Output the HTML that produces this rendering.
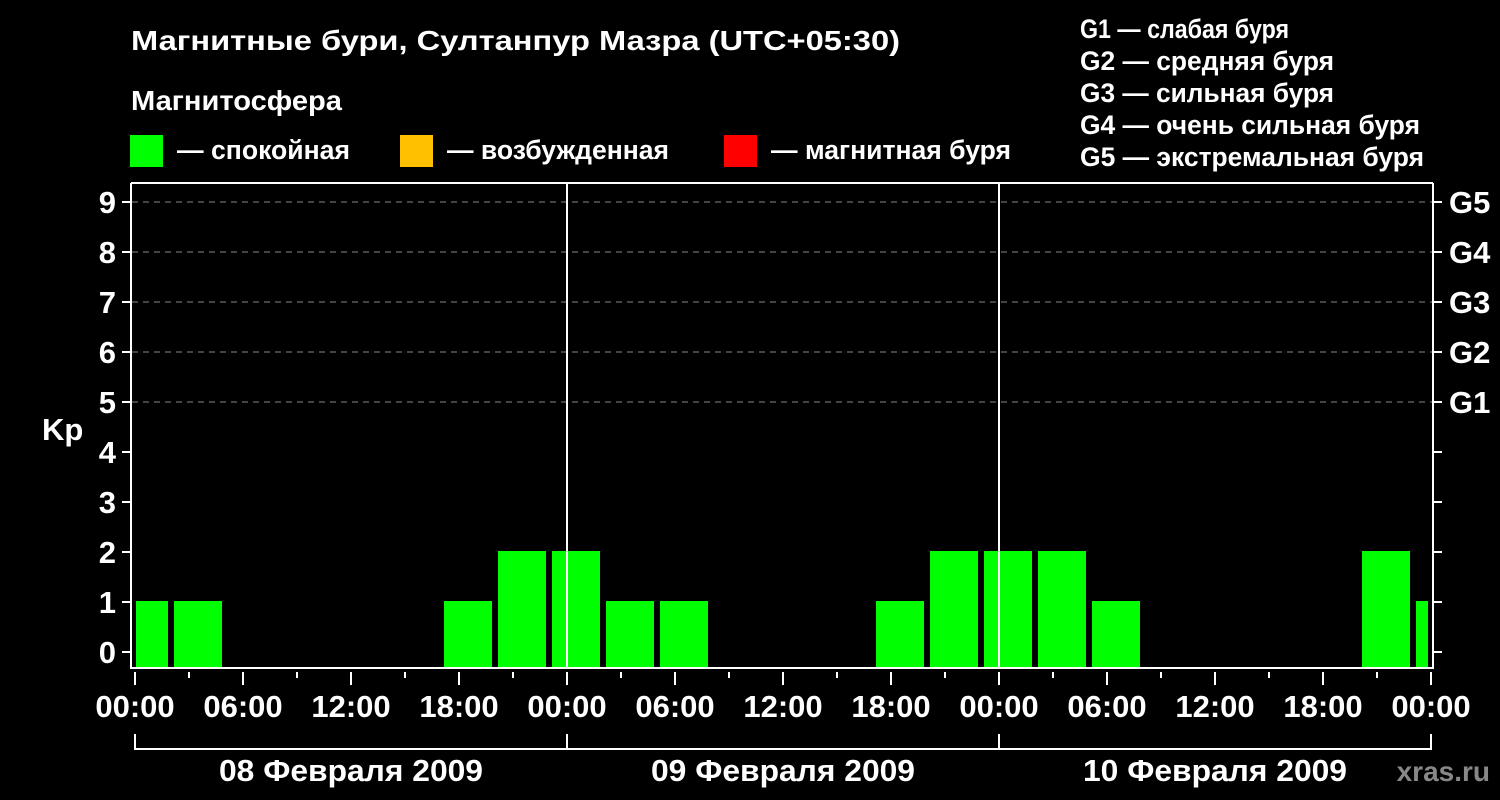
<!DOCTYPE html>
<html><head><meta charset="utf-8"><style>
html,body{margin:0;padding:0;background:#000;width:1500px;height:800px;overflow:hidden}
svg{display:block}
text{font-family:"Liberation Sans",Arial,sans-serif;font-weight:bold;fill:#fff}
</style></head><body>
<svg width="1500" height="800" viewBox="0 0 1500 800">
<rect width="1500" height="800" fill="#000"/>
<text x="131" y="50" font-size="28" textLength="769" lengthAdjust="spacingAndGlyphs">Магнитные бури, Султанпур Мазра (UTC+05:30)</text>
<text x="131" y="110" font-size="28" textLength="211" lengthAdjust="spacingAndGlyphs">Магнитосфера</text>
<rect x="130" y="135" width="33" height="32" fill="#00ff00"/>
<text x="177" y="159" font-size="27" textLength="173" lengthAdjust="spacingAndGlyphs">— спокойная</text>
<rect x="400" y="135" width="33" height="32" fill="#ffc000"/>
<text x="447" y="159" font-size="27" textLength="222" lengthAdjust="spacingAndGlyphs">— возбужденная</text>
<rect x="724" y="135" width="33" height="32" fill="#ff0000"/>
<text x="771" y="159" font-size="27" textLength="240" lengthAdjust="spacingAndGlyphs">— магнитная буря</text>
<g font-size="27">
<text x="1080" y="38" textLength="209" lengthAdjust="spacingAndGlyphs">G1 — слабая буря</text>
<text x="1080" y="70" textLength="254" lengthAdjust="spacingAndGlyphs">G2 — средняя буря</text>
<text x="1080" y="102" textLength="254" lengthAdjust="spacingAndGlyphs">G3 — сильная буря</text>
<text x="1080" y="134" textLength="340" lengthAdjust="spacingAndGlyphs">G4 — очень сильная буря</text>
<text x="1080" y="166" textLength="344" lengthAdjust="spacingAndGlyphs">G5 — экстремальная буря</text>
</g>
<g stroke="#888" stroke-width="1" stroke-dasharray="6,5">
<line x1="132" y1="202" x2="1432" y2="202"/>
<line x1="132" y1="252" x2="1432" y2="252"/>
<line x1="132" y1="302" x2="1432" y2="302"/>
<line x1="132" y1="352" x2="1432" y2="352"/>
<line x1="132" y1="402" x2="1432" y2="402"/>
</g>
<g fill="#00ff00">
<rect x="136" y="601" width="32" height="67"/>
<rect x="174" y="601" width="48" height="67"/>
<rect x="444" y="601" width="48" height="67"/>
<rect x="498" y="551" width="48" height="117"/>
<rect x="552" y="551" width="48" height="117"/>
<rect x="606" y="601" width="48" height="67"/>
<rect x="660" y="601" width="48" height="67"/>
<rect x="876" y="601" width="48" height="67"/>
<rect x="930" y="551" width="48" height="117"/>
<rect x="984" y="551" width="48" height="117"/>
<rect x="1038" y="551" width="48" height="117"/>
<rect x="1092" y="601" width="48" height="67"/>
<rect x="1362" y="551" width="48" height="117"/>
<rect x="1416" y="601" width="12" height="67"/>
</g>
<g stroke="#fff" stroke-width="2" fill="none">
<polyline points="131,183 131,668 1433,668 1433,183"/>
<line x1="131" y1="183" x2="1433" y2="183"/>
<line x1="567" y1="183" x2="567" y2="668"/>
<line x1="999" y1="183" x2="999" y2="668"/>
</g>
<g stroke="#fff" stroke-width="2">
<line x1="122" y1="202" x2="131" y2="202"/><line x1="122" y1="252" x2="131" y2="252"/>
<line x1="122" y1="302" x2="131" y2="302"/><line x1="122" y1="352" x2="131" y2="352"/>
<line x1="122" y1="402" x2="131" y2="402"/><line x1="122" y1="452" x2="131" y2="452"/>
<line x1="122" y1="502" x2="131" y2="502"/><line x1="122" y1="552" x2="131" y2="552"/>
<line x1="122" y1="602" x2="131" y2="602"/><line x1="122" y1="652" x2="131" y2="652"/>
<line x1="1433" y1="202" x2="1442" y2="202"/><line x1="1433" y1="252" x2="1442" y2="252"/>
<line x1="1433" y1="302" x2="1442" y2="302"/><line x1="1433" y1="352" x2="1442" y2="352"/>
<line x1="1433" y1="402" x2="1442" y2="402"/><line x1="1433" y1="452" x2="1442" y2="452"/>
<line x1="1433" y1="502" x2="1442" y2="502"/><line x1="1433" y1="552" x2="1442" y2="552"/>
<line x1="1433" y1="602" x2="1442" y2="602"/><line x1="1433" y1="652" x2="1442" y2="652"/>
<line x1="135" y1="672" x2="135" y2="685"/><line x1="243" y1="672" x2="243" y2="685"/>
<line x1="351" y1="672" x2="351" y2="685"/><line x1="459" y1="672" x2="459" y2="685"/>
<line x1="567" y1="672" x2="567" y2="685"/><line x1="675" y1="672" x2="675" y2="685"/>
<line x1="783" y1="672" x2="783" y2="685"/><line x1="891" y1="672" x2="891" y2="685"/>
<line x1="999" y1="672" x2="999" y2="685"/><line x1="1107" y1="672" x2="1107" y2="685"/>
<line x1="1215" y1="672" x2="1215" y2="685"/><line x1="1323" y1="672" x2="1323" y2="685"/>
<line x1="1431" y1="672" x2="1431" y2="685"/>
<line x1="189" y1="672" x2="189" y2="678"/><line x1="297" y1="672" x2="297" y2="678"/>
<line x1="405" y1="672" x2="405" y2="678"/><line x1="513" y1="672" x2="513" y2="678"/>
<line x1="621" y1="672" x2="621" y2="678"/><line x1="729" y1="672" x2="729" y2="678"/>
<line x1="837" y1="672" x2="837" y2="678"/><line x1="945" y1="672" x2="945" y2="678"/>
<line x1="1053" y1="672" x2="1053" y2="678"/><line x1="1161" y1="672" x2="1161" y2="678"/>
<line x1="1269" y1="672" x2="1269" y2="678"/><line x1="1377" y1="672" x2="1377" y2="678"/>
</g>
<g stroke="#fff" stroke-width="2" fill="none">
<polyline points="135,734 135,749 1431,749 1431,734"/>
<line x1="567" y1="734" x2="567" y2="749"/>
<line x1="999" y1="734" x2="999" y2="749"/>
</g>
<g font-size="31" text-anchor="end">
<text x="116" y="213">9</text><text x="116" y="263">8</text><text x="116" y="313">7</text>
<text x="116" y="363">6</text><text x="116" y="413">5</text><text x="116" y="463">4</text>
<text x="116" y="513">3</text><text x="116" y="563">2</text><text x="116" y="613">1</text>
<text x="116" y="663">0</text>
</g>
<text x="42" y="440" font-size="31">Kp</text>
<g font-size="31">
<text x="1449" y="213">G5</text><text x="1449" y="263">G4</text><text x="1449" y="313">G3</text>
<text x="1449" y="363">G2</text><text x="1449" y="413">G1</text>
</g>
<g font-size="31" text-anchor="middle">
<text x="135" y="717">00:00</text><text x="243" y="717">06:00</text><text x="351" y="717">12:00</text>
<text x="459" y="717">18:00</text><text x="567" y="717">00:00</text><text x="675" y="717">06:00</text>
<text x="783" y="717">12:00</text><text x="891" y="717">18:00</text><text x="999" y="717">00:00</text>
<text x="1107" y="717">06:00</text><text x="1215" y="717">12:00</text><text x="1323" y="717">18:00</text>
<text x="1431" y="717">00:00</text>
</g>
<g font-size="31" text-anchor="middle">
<text x="351" y="781" textLength="264" lengthAdjust="spacingAndGlyphs">08 Февраля 2009</text>
<text x="783" y="781" textLength="264" lengthAdjust="spacingAndGlyphs">09 Февраля 2009</text>
<text x="1215" y="781" textLength="264" lengthAdjust="spacingAndGlyphs">10 Февраля 2009</text>
</g>
<text x="1490" y="781" font-size="28" text-anchor="end" style="fill:#888">xras.ru</text>
</svg>
</body></html>
